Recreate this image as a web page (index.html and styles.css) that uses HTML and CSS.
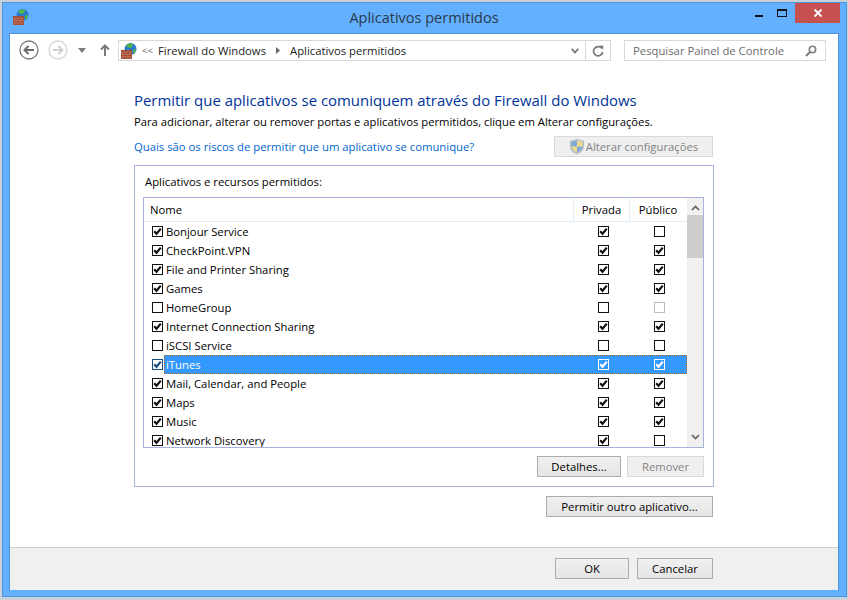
FILE: index.html
```html
<!DOCTYPE html>
<html lang="pt-BR">
<head>
<meta charset="utf-8">
<title>Aplicativos permitidos</title>
<link rel="stylesheet" href="styles.css">
</head>
<body>
<svg class="defs" width="0" height="0" aria-hidden="true">
  <symbol id="fw" viewBox="0 0 16 16">
    <circle cx="9.500" cy="6" r="6" fill="#2a78d0"/>
    <path d="M5 3c2-3 6-3 7-1.500.5 1-1 2-2 3s-2 1-3 0z" fill="#4fb548"/>
    <path d="M12 6.500c1.500-.5 3-.5 3.300.5L13 11l-1-2z" fill="#4fb548"/>
    <rect x="0" y="7" width="11" height="9" fill="#a0452f"/>
    <path d="M0 9.200h11M0 11.500h11M0 13.800h11M3 7v2.200M7 7v2.200M1.500 9.200v2.300M5 9.200v2.300M9 9.200v2.300M3 11.500v2.300M7 11.500v2.300M1.500 13.800V16M5 13.800V16M9 13.800V16" stroke="#c98b76" stroke-width=".6" fill="none"/>
  </symbol>
  <symbol id="ck" viewBox="0 0 13 13">
    <path d="M3.200 6.300L5.500 8.800 9.800 3.600" fill="none" stroke="currentColor" stroke-width="2.200"/>
  </symbol>
</svg>
<div class="window">
  <header class="titlebar">
    <svg class="ticon"><use href="#fw"/></svg>
    <div class="title">Aplicativos permitidos</div>
    <div class="controls">
      <span class="min"></span>
      <span class="max"></span>
      <span class="close"><svg width="10" height="10" viewBox="0 0 10 10"><path d="M1.500 1.500l7 7M8.500 1.500l-7 7" stroke="#fff" stroke-width="1.800"/></svg></span>
    </div>
  </header>
  <div class="client">
    <nav class="toolbar">
      <svg class="nav" width="20" height="20" viewBox="0 0 20 20"><circle cx="10" cy="10" r="9" fill="#fff" stroke="#7a7a7a" stroke-width="1.300"/><path d="M15 10H6M9.500 6L5.500 10l4 4" fill="none" stroke="#6a6a6a" stroke-width="2"/></svg>
      <svg class="nav nav2" width="20" height="20" viewBox="0 0 20 20"><circle cx="10" cy="10" r="9" fill="#fff" stroke="#d4d4d4" stroke-width="1.300"/><path d="M5 10h9M10.500 6l4 4-4 4" fill="none" stroke="#cfcfcf" stroke-width="2"/></svg>
      <svg class="drop" width="8" height="5" viewBox="0 0 8 5"><path d="M0 0h8L4 5z" fill="#7c7c7c"/></svg>
      <svg class="up" width="10" height="12" viewBox="0 0 10 12"><path d="M5 12V1.500M1 5.500l4-4 4 4" fill="none" stroke="#7a7a7a" stroke-width="2"/></svg>
      <div class="address">
        <svg class="aicon"><use href="#fw"/></svg>
        <span class="chev">&lt;&lt;</span>
        <span class="crumb">Firewall do Windows</span>
        <svg class="sep" width="4" height="7" viewBox="0 0 4 7"><path d="M0 0l4 3.500L0 7z" fill="#666"/></svg>
        <span class="crumb">Aplicativos permitidos</span>
        <svg class="adown" width="8" height="6" viewBox="0 0 8 6"><path d="M.7.700L4 4.500 7.300.700" fill="none" stroke="#6e6e6e" stroke-width="1.700"/></svg>
        <span class="refresh"><svg width="12" height="12" viewBox="0 0 12 12"><path d="M9.700 3.300A4.600 4.600 0 1 0 10.700 7" fill="none" stroke="#7a7a7a" stroke-width="1.700"/><path d="M7 .8l4.200-.3v4.200z" fill="#7a7a7a"/></svg></span>
      </div>
      <div class="search">
        <span>Pesquisar Painel de Controle</span>
        <svg width="12" height="12" viewBox="0 0 12 12"><circle cx="7.500" cy="4.500" r="3.200" fill="none" stroke="#7f7f7f" stroke-width="1.600"/><path d="M5 7l-4 4" stroke="#7f7f7f" stroke-width="2.200"/></svg>
      </div>
    </nav>
    <main class="main">
      <h1 class="heading">Permitir que aplicativos se comuniquem através do Firewall do Windows</h1>
      <p class="sub">Para adicionar, alterar ou remover portas e aplicativos permitidos, clique em Alterar configurações.</p>
      <div class="linkrow">
        <a class="link">Quais são os riscos de permitir que um aplicativo se comunique?</a>
        <button class="btn change" disabled>
          <svg width="16" height="17" viewBox="0 0 16 17"><path d="M8 .5c2 1.500 4 2 7 2v6c0 3.500-3 6.500-7 8-4-1.500-7-4.500-7-8v-6c3 0 5-.5 7-2z" fill="#b5c0cc"/><path d="M8 2v6.500H2.500V3.500C4.500 3.500 6.500 3 8 2zM8 8.500h5.500c-.3 2.500-2.500 4.500-5.500 6z" fill="#7fa8d8"/><path d="M8 2c1.500 1 3.500 1.500 5.500 1.500v5H8zM8 8.500v6c-3-1.500-5.200-3.500-5.500-6z" fill="#ecd98c"/></svg>
          Alterar configurações
        </button>
      </div>
      <section class="group">
        <div class="glabel">Aplicativos e recursos permitidos:</div>
        <div class="list">
          <div class="table">
            <div class="row head">
              <div class="name">Nome</div>
              <div class="col">Privada</div>
              <div class="col">Público</div>
            </div>
            <div class="rows">
              <div class="row"><div class="name"><span class="box on"><svg><use href="#ck"/></svg></span><span>Bonjour Service</span></div><div class="col"><span class="box on"><svg><use href="#ck"/></svg></span></div><div class="col"><span class="box"></span></div></div>
              <div class="row"><div class="name"><span class="box on"><svg><use href="#ck"/></svg></span><span>CheckPoint.VPN</span></div><div class="col"><span class="box on"><svg><use href="#ck"/></svg></span></div><div class="col"><span class="box on"><svg><use href="#ck"/></svg></span></div></div>
              <div class="row"><div class="name"><span class="box on"><svg><use href="#ck"/></svg></span><span>File and Printer Sharing</span></div><div class="col"><span class="box on"><svg><use href="#ck"/></svg></span></div><div class="col"><span class="box on"><svg><use href="#ck"/></svg></span></div></div>
              <div class="row"><div class="name"><span class="box on"><svg><use href="#ck"/></svg></span><span>Games</span></div><div class="col"><span class="box on"><svg><use href="#ck"/></svg></span></div><div class="col"><span class="box on"><svg><use href="#ck"/></svg></span></div></div>
              <div class="row"><div class="name"><span class="box"></span><span>HomeGroup</span></div><div class="col"><span class="box"></span></div><div class="col"><span class="box dis"></span></div></div>
              <div class="row"><div class="name"><span class="box on"><svg><use href="#ck"/></svg></span><span>Internet Connection Sharing</span></div><div class="col"><span class="box on"><svg><use href="#ck"/></svg></span></div><div class="col"><span class="box on"><svg><use href="#ck"/></svg></span></div></div>
              <div class="row"><div class="name"><span class="box"></span><span>iSCSI Service</span></div><div class="col"><span class="box"></span></div><div class="col"><span class="box"></span></div></div>
              <div class="row sel"><div class="name"><span class="box on first"><svg><use href="#ck"/></svg></span><span class="seltext">iTunes</span></div><div class="col"><span class="box on"><svg><use href="#ck"/></svg></span></div><div class="col"><span class="box on"><svg><use href="#ck"/></svg></span></div></div>
              <div class="row"><div class="name"><span class="box on"><svg><use href="#ck"/></svg></span><span>Mail, Calendar, and People</span></div><div class="col"><span class="box on"><svg><use href="#ck"/></svg></span></div><div class="col"><span class="box on"><svg><use href="#ck"/></svg></span></div></div>
              <div class="row"><div class="name"><span class="box on"><svg><use href="#ck"/></svg></span><span>Maps</span></div><div class="col"><span class="box on"><svg><use href="#ck"/></svg></span></div><div class="col"><span class="box on"><svg><use href="#ck"/></svg></span></div></div>
              <div class="row"><div class="name"><span class="box on"><svg><use href="#ck"/></svg></span><span>Music</span></div><div class="col"><span class="box on"><svg><use href="#ck"/></svg></span></div><div class="col"><span class="box on"><svg><use href="#ck"/></svg></span></div></div>
              <div class="row"><div class="name"><span class="box on"><svg><use href="#ck"/></svg></span><span>Network Discovery</span></div><div class="col"><span class="box on"><svg><use href="#ck"/></svg></span></div><div class="col"><span class="box"></span></div></div>
            </div>
          </div>
          <div class="scrollbar">
            <svg width="9" height="6" viewBox="0 0 9 6"><path d="M1 5l3.500-3.500L8 5" fill="none" stroke="#606060" stroke-width="1.700"/></svg>
            <div class="thumb"></div>
            <div class="track"></div>
            <svg width="9" height="6" viewBox="0 0 9 6"><path d="M1 1l3.500 3.500L8 1" fill="none" stroke="#606060" stroke-width="1.700"/></svg>
          </div>
        </div>
        <div class="listbtns">
          <button class="btn details">Detalhes...</button>
          <button class="btn remove" disabled>Remover</button>
        </div>
      </section>
      <div class="allow"><button class="btn allowbtn">Permitir outro aplicativo...</button></div>
    </main>
    <footer class="footer">
      <button class="btn ok">OK</button>
      <button class="btn cancel">Cancelar</button>
    </footer>
  </div>
</div>
</body>
</html>
```
FILE: styles.css
```css
* { box-sizing: border-box; }
html, body { margin: 0; height: 100%; }
body {
  background: #c9d2da;
  font-family: "Open Sans", "Liberation Sans", sans-serif;
  font-size: 11.3px;
  color: #000;
  overflow: hidden;
}
.defs { display: block; height: 0; }
.window {
  margin: 2px 1px 0 2px;
  height: 595px;
  border: 1px solid #4d95d6;
  background: #62b0ff;
  padding: 0 7px 6px 6px;
  display: flex;
  flex-direction: column;
}
.titlebar {
  height: 30px;
  flex: none;
  display: grid;
  grid-template-columns: 1fr auto 1fr;
  align-items: start;
}
.ticon { width: 16px; height: 16px; margin: 6px 0 0 4px; }
.title {
  font-size: 14.500px;
  line-height: 20px;
  margin-top: 5px;
  color: #2b3a4a;
}
.controls { display: flex; justify-content: flex-end; margin-right: -1px; }
.min { width: 8px; height: 2px; background: #111; margin: 12px 0 0 0; }
.max { width: 10px; height: 8px; border: 1px solid #111; border-top-width: 2px; margin: 6px 0 0 14px; }
.close {
  width: 45px; height: 20px; background: #c75050;
  margin-left: 8px;
  display: flex; align-items: center; justify-content: center;
}
.client {
  flex: 1;
  min-height: 0;
  background: #fff;
  border: 1px solid #4d95d6;
  border-bottom: 0;
  display: flex;
  flex-direction: column;
}
.toolbar {
  height: 36px;
  flex: none;
  display: flex;
  align-items: flex-start;
  padding: 6px 11px 0 9px;
  color: #333;
}
.nav { margin-top: 0; }
.nav2 { margin-left: 9px; }
.drop { margin: 8px 0 0 10px; }
.up { margin: 4px 0 0 14px; }
.address {
  margin-left: 8px;
  width: 493px;
  height: 21px;
  border: 1px solid #d9d9d9;
  display: flex;
  align-items: center;
  white-space: nowrap;
}
.aicon { width: 16px; height: 16px; margin-left: 2px; }
.chev { margin: 0 0 0 5px; color: #555; font-size: 9.500px; width: 16px; }
.crumb { color: #222; }
.sep { margin: 0 10px 0 10px; }
.adown { margin-left: auto; }
.refresh {
  width: 25px; height: 19px; margin-left: 6px;
  border-left: 1px solid #d9d9d9;
  display: flex; align-items: center; justify-content: center;
}
.search {
  margin-left: 13px;
  width: 202px;
  height: 21px;
  border: 1px solid #d9d9d9;
  display: flex;
  align-items: center;
  justify-content: space-between;
  padding: 0 8px;
  color: #6d6d6d;
  white-space: nowrap;
}
.main {
  flex: 1;
  padding: 19px 124px 0 124px;
  min-height: 0;
}
.heading {
  margin: 0;
  font-weight: 400;
  font-size: 14.930px;
  line-height: 22px;
  color: #003399;
  white-space: nowrap;
}
.sub { margin: 2px 0 0; line-height: 18px; white-space: nowrap; font-size: 11.250px; }
.linkrow {
  display: flex;
  justify-content: space-between;
  align-items: center;
  height: 21px;
  margin-top: 5px;
  margin-right: 1px;
}
.link { color: #0066cc; }
.btn {
  font: inherit;
  color: #000;
  height: 21px;
  padding: 0;
  border: 1px solid #acacac;
  background: linear-gradient(#f0f0f0, #e5e5e5);
  white-space: nowrap;
}
.change {
  width: 159px;
  background: #efefef;
  border-color: #d9d9d9;
  color: #838383;
  display: flex; align-items: center; justify-content: center; gap: 1px;
}
.group {
  margin-top: 8px;
  width: 580px;
  height: 322px;
  border: 1px solid #a9b2dc;
  padding: 8px 9px 0 8px;
}
.glabel { line-height: 16px; margin-left: 2px; }
.list {
  margin-top: 7px;
  height: 251px;
  border: 1px solid #a9b2dc;
  display: flex;
  overflow: hidden;
}
.table { flex: 1; min-width: 0; }
.rows { overflow: hidden; height: 225px; }
.row {
  display: grid;
  grid-template-columns: 429px 56px 58px;
  height: 19px;
  align-items: center;
}
.head {
  height: 24px;
  border-bottom: 1px solid #e3edf7;
}
.head .name { padding-left: 6px; height: 100%; display: flex; align-items: center; }
.head .col { border-left: 1px solid #e3edf7; height: 100%; display: flex; align-items: center; justify-content: center; padding-left: 0; }
.name { display: flex; align-items: center; padding-left: 8px; white-space: nowrap; height: 100%; }
.name .box { margin-right: 3px; }
.col { display: flex; justify-content: center; align-items: center; padding-left: 4px; }
.col:last-child { padding-right: 1px; }
.box {
  width: 11px; height: 11px;
  border: 1px solid #111;
  background: #fff;
  flex: none;
  color: #111;
  display: block;
  position: relative;
}
.box svg { width: 13px; height: 13px; margin: -2px 0 0 -2px; display: block; }
.box.dis { border-color: #bdbdbd; }
.sel { background: #3399ff; color: #fff; outline: 1px dotted #b8681c; outline-offset: -1px; margin-left: 20px; grid-template-columns: 409px 56px 58px; }
.sel .name { padding-left: 0; }
.sel .box { background: transparent; border-color: #fff; color: #fff; }
.sel .box.first { margin-left: -12px; margin-right: 3px; background: #fff; border-color: #1d4f80; color: #1d4f80; }
.seltext { color: #fff; }
.scrollbar {
  width: 16px;
  background: #f0f0f0;
  display: flex;
  flex-direction: column;
  align-items: center;
  padding: 7px 0 7px;
  flex: none;
}
.thumb { width: 100%; height: 43px; background: #cdcdcd; margin-top: 4px; }
.track { flex: 1; }
.listbtns {
  display: flex;
  justify-content: flex-end;
  gap: 6px;
  margin-top: 8px;
}
.details { width: 84px; }
.remove { width: 77px; background: #efefef; border-color: #d9d9d9; color: #838383; }
.allow { display: flex; justify-content: flex-end; margin: 9px 1px 0 0; }
.allowbtn { width: 167px; }
.footer {
  height: 43px;
  flex: none;
  background: #f0f0f0;
  border-top: 1px solid #cfcfcf;
  display: flex;
  justify-content: flex-end;
  gap: 8px;
  padding: 10px 125px 0 0;
}
.ok { width: 74px; }
.cancel { width: 76px; }
```
